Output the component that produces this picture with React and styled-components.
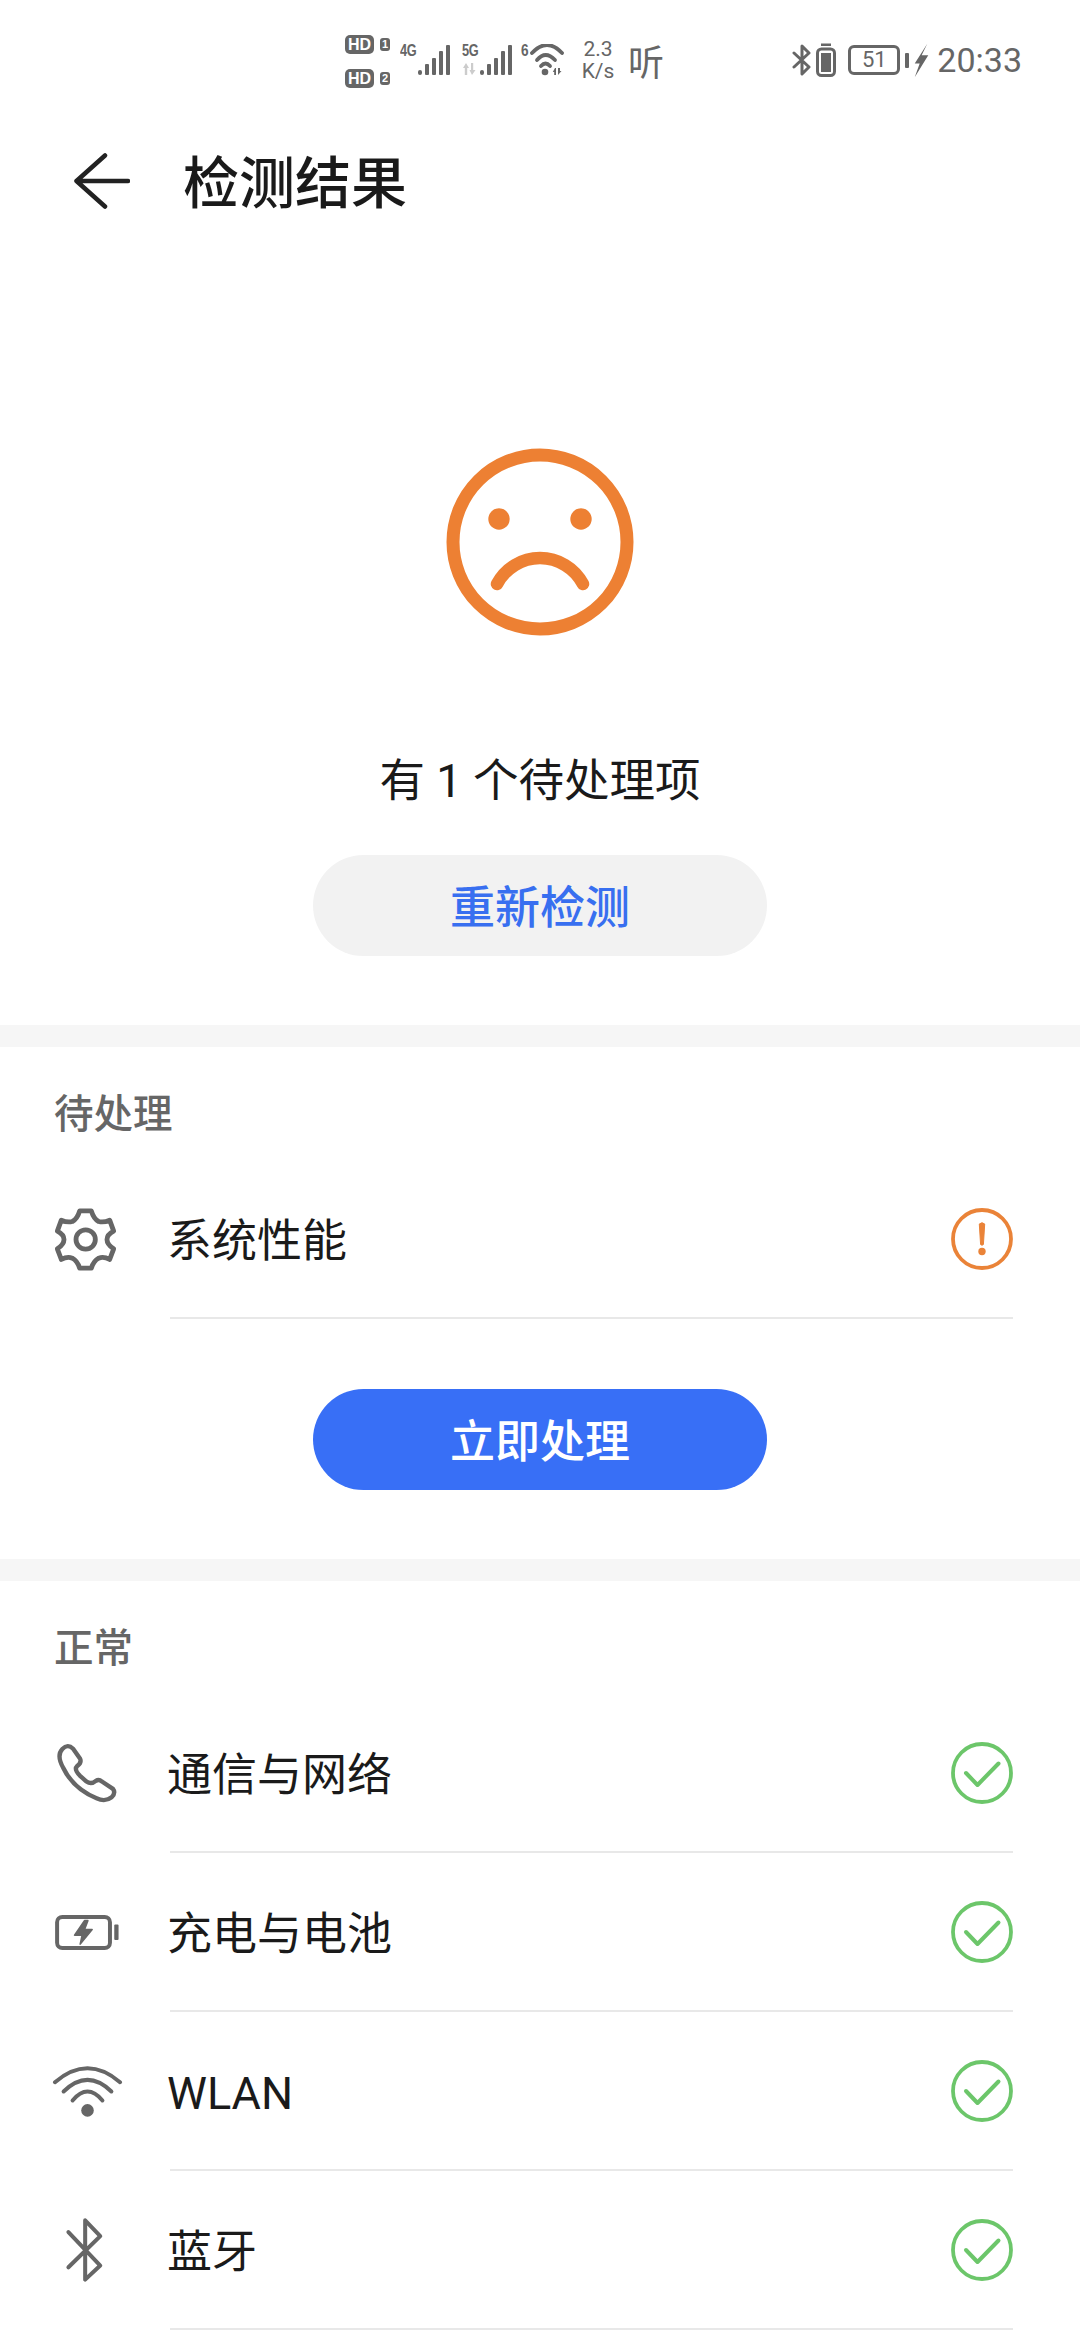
import React from "react";
import styled, { createGlobalStyle } from "styled-components";

const Global = createGlobalStyle`
  html, body { margin: 0; padding: 0; background: #fff; }
  body { font-family: Roboto, "Noto Sans CJK SC", sans-serif; color: #1a1a1a; }
`;

const Page = styled.div`
  width: 1080px;
  height: 2338px;
  overflow: hidden;
  background: #fff;
`;

const StatusBar = styled.div`
  height: 120px;
  display: flex;
  align-items: center;
  justify-content: space-between;
  padding: 0 58px 0 345px;
  color: #666;
`;
const StatusGroup = styled.div`
  display: flex;
  align-items: center;
`;
const SimStack = styled.div`
  display: flex;
  flex-direction: column;
  gap: 15px;
  margin: 3px 10px 0 0;
`;
const SimLine = styled.div`
  display: flex;
  align-items: center;
  gap: 6px;
`;
const HdPill = styled.span`
  width: 29px;
  height: 19px;
  border-radius: 5px;
  background: #666;
  color: #fff;
  font: 700 16px/19px "Liberation Sans", sans-serif;
  text-align: center;
`;
const SimNo = styled.span`
  width: 10px;
  height: 13px;
  border-radius: 3px;
  background: #666;
  color: #fff;
  font: 700 11px/13px "Liberation Sans", sans-serif;
  text-align: center;
`;
const NetColumn = styled.div`
  width: 18px;
  align-self: stretch;
  display: flex;
  flex-direction: column;
  gap: 5px;
  padding-top: 12px;
  box-sizing: border-box;
`;
const NetTag = styled.span`
  font: 700 17px/14px "Liberation Sans", sans-serif;
  letter-spacing: -0.5px;
  white-space: nowrap;
  transform: scaleX(0.75);
  transform-origin: left center;
`;
const Signal = styled.svg`
  width: 32px;
  height: 32px;
  margin-right: ${p => p.$gap}px;
`;
const WifiTag = styled.span`
  width: 9px;
  align-self: flex-start;
  margin-top: 12px;
  font: 700 17px/14px "Liberation Sans", sans-serif;
  transform: scaleX(0.8);
  transform-origin: left center;
`;
const SpeedBox = styled.div`
  width: 34px;
  margin: 0 13px 0 17px;
  text-align: center;
  font: 400 21px/22px Roboto, sans-serif;
`;
const Listen = styled.span`
  font: 400 36px/36px "Noto Sans CJK SC", sans-serif;
`;
const SmallBattery = styled.svg`
  width: 20px;
  height: 34px;
  margin-left: 4px;
`;
const BatteryBox = styled.div`
  width: 52px;
  height: 30px;
  box-sizing: border-box;
  border: 3px solid #666;
  border-radius: 6px;
  margin-left: 12px;
  font: 400 22px/24px Roboto, sans-serif;
  text-align: center;
`;
const BatteryCap = styled.div`
  width: 4px;
  height: 15px;
  margin-left: 5px;
  background: #666;
  border-radius: 1px;
`;
const ChargeBolt = styled.svg`
  width: 15px;
  height: 35px;
  margin-left: 5px;
`;
const Clock = styled.span`
  font: 400 34px/40px Roboto, sans-serif;
  margin-left: 8px;
`;

const Header = styled.header`
  height: 122px;
  display: flex;
  align-items: center;
  padding-left: 74px;
`;
const BackIcon = styled.svg`
  width: 56px;
  height: 56px;
  margin-right: 53px;
`;
const Title = styled.h1`
  margin: 0;
  padding-top: 6px;
  font: 500 56px/70px Roboto, "Noto Sans CJK SC", sans-serif;
  color: #1a1a1a;
`;

const Hero = styled.section`
  display: flex;
  flex-direction: column;
  align-items: center;
  padding: 206px 0 69px;
`;
const Face = styled.svg`
  width: 188px;
  height: 188px;
`;
const Summary = styled.div`
  margin-top: 116px;
  font: 400 45.5px/60px Roboto, "Noto Sans CJK SC", sans-serif;
  color: #1a1a1a;
`;
const PillButton = styled.button`
  width: 454px;
  height: 101px;
  margin-top: ${p => p.$top}px;
  border: 0;
  padding: 6px 0 0;
  border-radius: 51px;
  background: ${p => (p.$primary ? "#386ff6" : "#f2f2f2")};
  color: ${p => (p.$primary ? "#fff" : "#386ff0")};
  font: 500 45px/95px Roboto, "Noto Sans CJK SC", sans-serif;
  display: block;
`;
const Divider = styled.div`
  height: 22px;
  background: #f6f6f6;
`;
const SectionTitle = styled.h2`
  margin: 0;
  padding: 35px 0 12px 54px;
  font: 500 39.5px/66px Roboto, "Noto Sans CJK SC", sans-serif;
  color: #666;
`;
const Row = styled.div`
  display: flex;
  height: 159px;
  padding: 0 67px 0 0;
`;
const IconSlot = styled.div`
  width: 170px;
  flex: none;
  display: flex;
  align-items: center;
  padding-bottom: 1px;
  box-sizing: border-box;
`;
const RowIcon = styled.svg`
  display: block;
  width: ${p => p.$w}px;
  height: ${p => p.$h}px;
  margin-left: ${p => p.$left}px;
`;
const RowBody = styled.div`
  flex: 1;
  display: flex;
  align-items: center;
  justify-content: space-between;
  border-bottom: 2px solid #e8e8e8;
`;
const RowLabel = styled.span`
  margin-left: -3px;
  padding-top: 6px;
  font: 400 45px/60px Roboto, "Noto Sans CJK SC", sans-serif;
  color: #1a1a1a;
`;
const StateIcon = styled.svg`
  width: 64px;
  height: 64px;
  display: block;
`;
const Action = styled.div`
  display: flex;
  justify-content: center;
  padding-bottom: 69px;
`;

const Bars = ({ gap }) => (
  <Signal viewBox="0 0 32 32" $gap={gap} fill="#666">
    <rect x="0" y="26" width="4" height="5" rx="2" />
    <rect x="7" y="20" width="4" height="11" rx="1" />
    <rect x="14" y="14" width="4" height="17" rx="1" />
    <rect x="21" y="7" width="4" height="24" rx="1" />
    <rect x="28" y="1" width="4" height="30" rx="1" />
  </Signal>
);

const Check = () => (
  <StateIcon viewBox="0 0 64 64" fill="none" stroke="#6cc66a">
    <circle cx="33" cy="32" r="29" strokeWidth="3.8" />
    <path d="M17 32 L28.5 44 L49.5 22.5" strokeWidth="4" strokeLinecap="round" strokeLinejoin="round" />
  </StateIcon>
);

const Warn = () => (
  <StateIcon viewBox="0 0 64 64" fill="none" stroke="#ea8338">
    <circle cx="33" cy="32" r="29" strokeWidth="3.8" />
    <path d="M30.3 17 Q33 14.5 35.7 17 L34.4 37.5 Q33 39 31.6 37.5 Z" fill="#ea8338" strokeWidth="1" strokeLinejoin="round" />
    <circle cx="33" cy="44.5" r="3.7" fill="#ea8338" stroke="none" />
  </StateIcon>
);

const Gear = () => (
  <RowIcon viewBox="70 80 195 200" $w={65} $h={67} $left={53} fill="none" stroke="#666" strokeWidth="14.5" strokeLinejoin="round">
    <path d="M150 94 L185 94 Q192 118 207 126 Q222 130 240 122 L252 155 Q232 165 232 180 Q232 195 252 208 L240 240 Q222 230 207 236 Q192 244 185 266 L150 266 Q143 244 128 236 Q113 230 95 240 L83 208 Q103 195 103 180 Q103 165 83 155 L95 122 Q113 130 128 126 Q143 118 150 94 Z" />
    <circle cx="168" cy="180" r="29" />
  </RowIcon>
);
const Phone = () => (
  <RowIcon viewBox="70 60 200 200" $w={67} $h={67} $left={53} fill="none" stroke="#666" strokeWidth="13" strokeLinejoin="round">
    <path d="M98 87 Q114 70 130 86 L151 116 Q156 128 142 138 Q132 148 150 166 L170 184 Q184 194 198 182 Q207 176 216 184 L249 206 Q258 218 245 231 Q226 246 200 234 Q130 205 100 142 Q80 106 98 87 Z" />
  </RowIcon>
);
const Charge = () => (
  <RowIcon viewBox="70 580 205 115" $w={68} $h={38} $left={53} fill="none" stroke="#666">
    <rect x="82" y="592" width="160" height="94" rx="16" strokeWidth="12" />
    <rect x="255" y="615" width="13" height="47" rx="3" fill="#666" stroke="none" />
    <path d="M165 603 L135 647 L158 647 L152 674 L188 630 L165 630 L175 603 Z" fill="#666" strokeWidth="5" strokeLinejoin="round" />
  </RowIcon>
);
const Wifi = () => (
  <RowIcon viewBox="60 70 220 170" $w={73} $h={57} $left={51} fill="none" stroke="#666" strokeWidth="12" strokeLinecap="round">
    <path d="M72 127 Q170 43 268 127" />
    <path d="M98 155 Q170 85 242 155" />
    <path d="M125 182 Q170 128 215 182" />
    <circle cx="170" cy="212" r="19" fill="#666" stroke="none" />
  </RowIcon>
);
const Blue = () => (
  <RowIcon viewBox="105 535 125 200" $w={42} $h={67} $left={64} fill="none" stroke="#666" strokeWidth="12" strokeLinecap="round" strokeLinejoin="round">
    <path d="M118 580 L213 680 L168 722 L168 545 L213 592 L118 685" />
  </RowIcon>
);

const rows = [
  ["通信与网络", Phone],
  ["充电与电池", Charge],
  ["WLAN", Wifi],
  ["蓝牙", Blue],
];

export default function App() {
  return (
    <Page>
      <Global />
      <StatusBar>
        <StatusGroup>
          <SimStack>
            <SimLine><HdPill>HD</HdPill><SimNo>1</SimNo></SimLine>
            <SimLine><HdPill>HD</HdPill><SimNo>2</SimNo></SimLine>
          </SimStack>
          <NetColumn><NetTag>4G</NetTag></NetColumn>
          <Bars gap={12} />
          <NetColumn>
            <NetTag>5G</NetTag>
            <svg width="15" height="12" viewBox="0 0 15 12" fill="#ccc">
              <path d="M4 0 L7 5 H5.2 V12 H2.8 V5 H1 Z M9 0 H11.2 V7 H13.5 L10 12 L7.5 7 H9 Z" />
            </svg>
          </NetColumn>
          <Bars gap={9} />
          <WifiTag>6</WifiTag>
          <svg width="34" height="32" viewBox="0 0 34 32" fill="none" stroke="#666" strokeWidth="3.8" strokeLinecap="round">
            <path d="M2 9 Q17 -7 32 9" />
            <path d="M7 16 Q15.5 6 25 16" />
            <path d="M11 22 Q15.5 17 20 22" />
            <circle cx="15" cy="28" r="3.3" fill="#666" stroke="none" />
            <path d="M25 24 L22.8 28 H24.2 V31 H26 V24 Z M28 24 V31 L31.5 27 H30 V24 Z" fill="#666" stroke="none" />
          </svg>
          <SpeedBox>2.3<br />K/s</SpeedBox>
          <Listen>听</Listen>
        </StatusGroup>
        <StatusGroup>
          <svg width="20" height="32" viewBox="0 0 20 32" fill="none" stroke="#666" strokeWidth="3" strokeLinejoin="round" strokeLinecap="round">
            <path d="M2 9 L17 23 L10 30 L10 2 L17 9 L2 23" />
          </svg>
          <SmallBattery viewBox="0 0 20 34" fill="none" stroke="#666">
            <rect x="1.5" y="6" width="17" height="26.5" rx="4" strokeWidth="3" />
            <rect x="5" y="10" width="10" height="19" fill="#666" stroke="none" />
            <rect x="5" y="0.5" width="10" height="2.5" fill="#666" stroke="none" />
          </SmallBattery>
          <BatteryBox>51</BatteryBox>
          <BatteryCap />
          <ChargeBolt viewBox="435 68 45 106" fill="#666">
            <path d="M475 70 L437 130 L452 130 L437 172 L478 105 L458 105 Z" />
          </ChargeBolt>
          <Clock>20:33</Clock>
        </StatusGroup>
      </StatusBar>

      <Header>
        <BackIcon viewBox="0 0 56 56" fill="none" stroke="#222" strokeWidth="4.5" strokeLinecap="round" strokeLinejoin="round">
          <path d="M31 2.5 L2.5 28 L31 53.5 M2.5 28 H54" />
        </BackIcon>
        <Title>检测结果</Title>
      </Header>

      <Hero>
        <Face viewBox="0 0 188 188" fill="none" stroke="#ed8033">
          <circle cx="94" cy="94" r="87" strokeWidth="13" />
          <circle cx="53" cy="71" r="10.7" fill="#ed8033" stroke="none" />
          <circle cx="135" cy="71" r="10.7" fill="#ed8033" stroke="none" />
          <path d="M51 136 A48.6 48.6 0 0 1 137 136" strokeWidth="12.5" strokeLinecap="round" />
        </Face>
        <Summary>有 1 个待处理项</Summary>
        <PillButton $top={43}>重新检测</PillButton>
      </Hero>

      <Divider />

      <SectionTitle>待处理</SectionTitle>
      <Row>
        <IconSlot><Gear /></IconSlot>
        <RowBody>
          <RowLabel>系统性能</RowLabel>
          <Warn />
        </RowBody>
      </Row>
      <Action>
        <PillButton $primary $top={70}>立即处理</PillButton>
      </Action>

      <Divider />

      <SectionTitle>正常</SectionTitle>
      {rows.map(([label, Icon]) => (
        <Row key={label}>
          <IconSlot><Icon /></IconSlot>
          <RowBody>
            <RowLabel>{label}</RowLabel>
            <Check />
          </RowBody>
        </Row>
      ))}
    </Page>
  );
}
